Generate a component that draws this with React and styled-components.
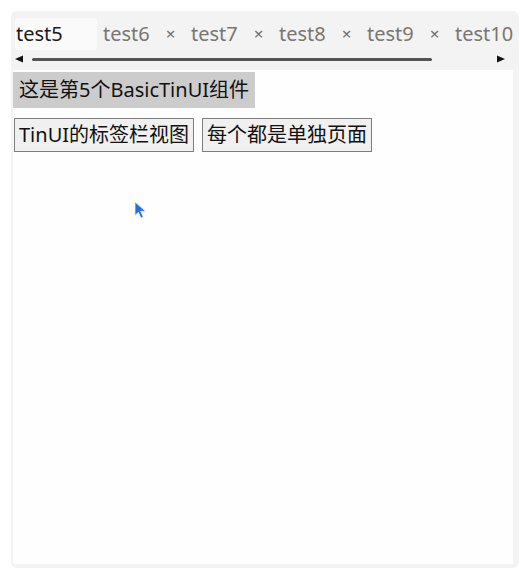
import React from "react";
import styled, { createGlobalStyle } from "styled-components";

const GlobalStyle = createGlobalStyle`
  html, body {
    margin: 0;
    padding: 0;
    background: #ffffff;
  }
  body {
    font-family: "Noto Sans", "Noto Sans CJK SC", sans-serif;
  }
`;

const Panel = styled.div`
  box-sizing: border-box;
  margin: 11px 0 0 11px;
  width: 508px;
  height: 557px;
  background: #f3f3f3;
  border-radius: 6px;
  padding: 7px 6px 4px 2px;
  display: flex;
  flex-direction: column;
  overflow: hidden;
`;

const TabBar = styled.div`
  display: flex;
  align-items: center;
  height: 32px;
  padding-left: 2px;
  overflow: hidden;
  white-space: nowrap;
  font-size: 20px;
`;

const ActiveTab = styled.div`
  flex: none;
  box-sizing: border-box;
  width: 82px;
  height: 32px;
  line-height: 32px;
  padding-left: 1px;
  background: #fafafa;
  color: #1a1a1a;
  border-radius: 3px;
  margin-right: 6px;
`;

const Tab = styled.div`
  flex: none;
  display: flex;
  align-items: center;
  height: 32px;
  line-height: 32px;
  color: #7a7670;
  margin-right: 15px;
`;

const TabLabel = styled.span`
  display: inline-block;
  width: 62px;
`;

const Close = styled.span`
  display: inline-block;
  width: 11px;
  text-align: center;
  font-size: 17px;
  color: #6f6f6f;
`;

const ScrollRow = styled.div`
  display: flex;
  align-items: center;
  height: 18px;
  margin-bottom: 2px;
  padding: 0 7px 0 1px;
`;

const Arrow = styled.svg`
  flex: none;
  width: 10px;
  height: 8px;
  fill: #111111;
`;

const Track = styled.div`
  flex: 1;
  margin: 0 6px 0 8px;
  display: flex;
  align-items: center;
`;

const Thumb = styled.div`
  width: 400px;
  height: 3px;
  border-radius: 2px;
  background: #555555;
`;

const Content = styled.div`
  position: relative;
  flex: 1;
  background: #fefefe;
  padding-top: 2px;
  display: flex;
  flex-direction: column;
  align-items: flex-start;
  font-size: 20px;
  color: #111111;
`;

const Label = styled.div`
  height: 36px;
  line-height: 36px;
  padding: 0 6px;
  background: #cccccc;
  white-space: nowrap;
`;

const ButtonRow = styled.div`
  display: flex;
  gap: 8px;
  margin-top: 10px;
  padding-left: 1px;
`;

const Button = styled.button`
  box-sizing: border-box;
  height: 34px;
  line-height: 32px;
  padding: 0 4px;
  margin: 0;
  border: 1px solid #7e7e7e;
  background: #f0f0f0;
  color: #111111;
  font-family: "Noto Sans", "Noto Sans CJK SC", sans-serif;
  font-size: 20px;
  white-space: nowrap;
  cursor: default;
`;

const Cursor = styled.svg`
  position: absolute;
  left: 121px;
  top: 131px;
  width: 13px;
  height: 18px;
`;

const tabs = ["test6", "test7", "test8", "test9", "test10"];

export default function App() {
  return (
    <>
      <GlobalStyle />
      <Panel>
        <TabBar>
          <ActiveTab>test5</ActiveTab>
          {tabs.map((t, i) => (
            <Tab key={t}>
              <TabLabel>{t}</TabLabel>
              {i < tabs.length - 1 && <Close>×</Close>}
            </Tab>
          ))}
        </TabBar>
        <ScrollRow>
          <Arrow viewBox="0 0 10 8">
            <polygon points="9,0.5 9,7.5 1,4" />
          </Arrow>
          <Track>
            <Thumb />
          </Track>
          <Arrow viewBox="0 0 10 8">
            <polygon points="1,0.5 1,7.5 9,4" />
          </Arrow>
        </ScrollRow>
        <Content>
          <Label>这是第5个BasicTinUI组件</Label>
          <ButtonRow>
            <Button>TinUI的标签栏视图</Button>
            <Button>每个都是单独页面</Button>
          </ButtonRow>
          <Cursor viewBox="0 0 13 18">
            <path
              d="M1 1 L1 14.5 L4.3 11.2 L7 17 L9.2 16 L6.6 10.2 L11.5 10.2 Z"
              fill="#1f6fe5"
              stroke="#dfeaff"
              strokeWidth="0.8"
              strokeLinejoin="round"
            />
          </Cursor>
        </Content>
      </Panel>
    </>
  );
}
